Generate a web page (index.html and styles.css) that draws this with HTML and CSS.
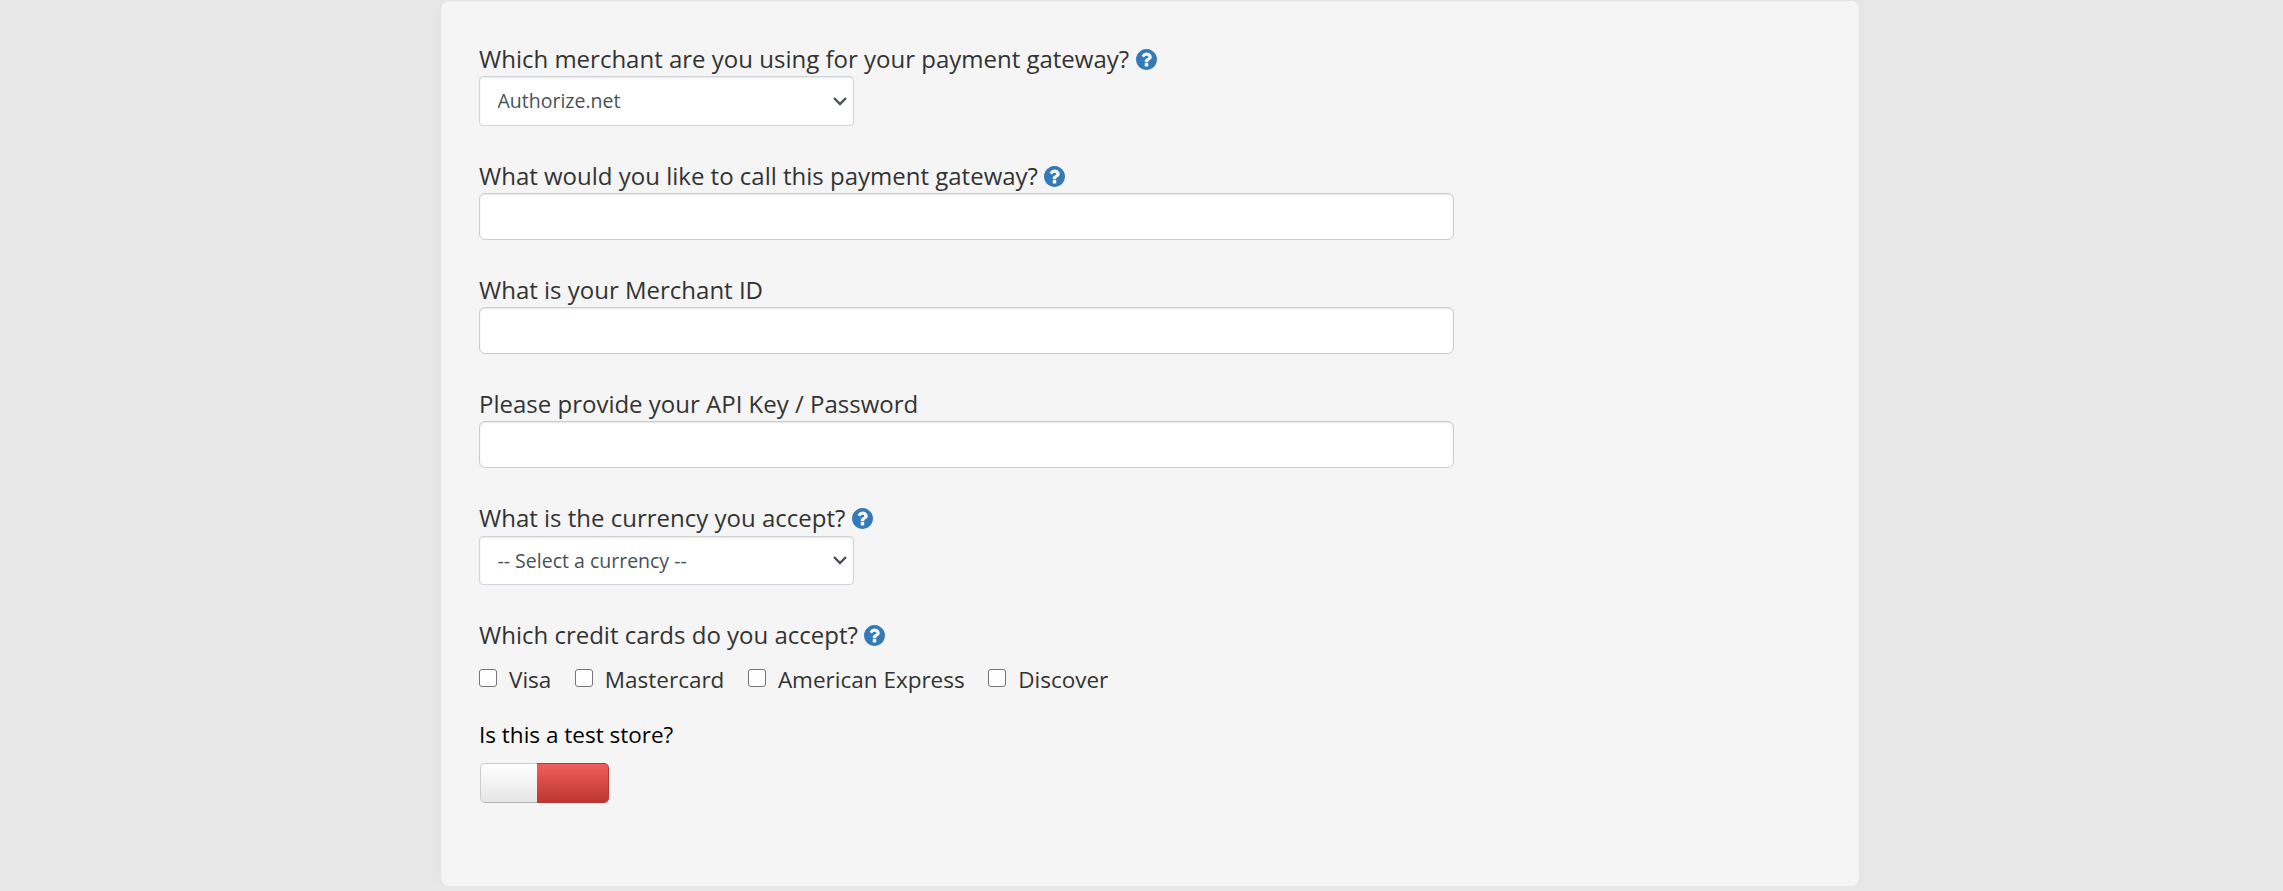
FILE: index.html
```html
<!DOCTYPE html>
<html lang="en">
<head>
<meta charset="utf-8">
<meta name="viewport" content="width=device-width, initial-scale=1">
<title>Payment Gateway</title>
<link rel="stylesheet" href="styles.css">
</head>
<body>
<svg class="sprite" width="0" height="0">
    <symbol id="help" viewBox="0 0 1536 1536">
        <path d="M896 1248v-192q0-14-9-23t-23-9H672q-14 0-23 9t-9 23v192q0 14 9 23t23 9h192q14 0 23-9t9-23zm256-672q0-88-55.500-163T958 297t-170-41q-243 0-371 213-15 24 8 42l132 100q7 6 19 6 16 0 25-12 53-68 86-92 34-24 86-24 48 0 85.500 26t37.500 59q0 38-20 61t-68 45q-63 28-115.500 86.500T640 892v36q0 14 9 23t23 9h192q14 0 23-9t9-23q0-19 21.500-49.500T972 829q32-18 49-28.500t46-35 44.500-48 28-60.500 12.500-81zm384 192q0 209-103 385.500T1153.500 1433 768 1536t-385.500-103T103 1153.500 0 768t103-385.500T382.500 103 768 0t385.500 103T1433 382.500 1536 768z"/>
    </symbol>
    <symbol id="chevron" viewBox="0 0 14 9">
        <path d="M1 1l6 6 6-6" fill="none" stroke="currentColor" stroke-width="2.400"/>
    </symbol>
</svg>

<form class="panel">
    <div class="form-group">
        <label for="merchant">Which merchant are you using for your payment gateway?</label>
        <svg class="help"><use href="#help"/></svg>
        <div class="select-wrap">
            <select class="form-control" id="merchant" name="merchant">
                <option>Authorize.net</option>
            </select>
            <svg class="chevron"><use href="#chevron"/></svg>
        </div>
    </div>

    <div class="form-group">
        <label for="gateway_name">What would you like to call this payment gateway?</label>
        <svg class="help"><use href="#help"/></svg>
        <input type="text" class="text-input" id="gateway_name" name="gateway_name">
    </div>

    <div class="form-group">
        <label for="merchant_id">What is your Merchant ID</label>
        <input type="text" class="text-input" id="merchant_id" name="merchant_id">
    </div>

    <div class="form-group">
        <label for="api_key">Please provide your API Key / Password</label>
        <input type="password" class="text-input" id="api_key" name="api_key">
    </div>

    <div class="form-group currency">
        <label for="currency">What is the currency you accept?</label>
        <svg class="help"><use href="#help"/></svg>
        <div class="select-wrap">
            <select class="form-control" id="currency" name="currency">
                <option>-- Select a currency --</option>
            </select>
            <svg class="chevron"><use href="#chevron"/></svg>
        </div>
    </div>

    <div class="form-group cards">
        <label>Which credit cards do you accept?</label>
        <svg class="help"><use href="#help"/></svg>
        <div class="card-list">
            <label class="check"><input type="checkbox" name="visa">Visa</label>
            <label class="check"><input type="checkbox" name="mastercard">Mastercard</label>
            <label class="check"><input type="checkbox" name="amex">American Express</label>
            <label class="check"><input type="checkbox" name="discover">Discover</label>
        </div>
    </div>

    <div class="test-store">Is this a test store?</div>
    <div class="toggle">
        <span class="toggle-handle"></span>
        <span class="toggle-off"></span>
    </div>
</form>
</body>
</html>
```

FILE: styles.css
```css
* {
    box-sizing: border-box;
}
body {
    margin: 0;
    background-color: #e8e8e8;
    color: #333;
    font-family: "Open Sans", sans-serif;
    font-size: 24px;
    line-height: 34px;
}
.sprite {
    display: block;
}
.panel {
    width: 1418px;
    height: 885px;
    margin: 1px 424px 0 441px;
    padding: 41px 38px 0;
    background-color: #f5f5f5;
    border-radius: 8px;
    box-shadow: 0 0 14px rgba(0, 0, 0, 0.04);
}
.form-group {
    display: flex;
    flex-wrap: wrap;
    align-items: center;
    column-gap: 6.5px;
    margin-bottom: 33px;
}
.help {
    width: 21px;
    height: 21px;
    fill: #337ab7;
}
.select-wrap {
    position: relative;
    flex: 0 0 100%;
    height: 50px;
}
.form-control {
    appearance: none;
    display: block;
    width: 375px;
    height: 50px;
    padding: 0 17.5px 2px;
    border: 1px solid #ced4da;
    border-radius: 4px;
    background-color: #fff;
    box-shadow: inset 0 1px 2px rgba(0, 0, 0, 0.1);
    color: #495057;
    font-family: inherit;
    font-size: 19.5px;
}
.chevron {
    position: absolute;
    left: 354px;
    top: 21px;
    width: 14px;
    height: 9px;
    color: #495057;
}
.text-input {
    display: block;
    width: 975px;
    height: 47px;
    margin-right: 300px;
    padding: 6px 12px;
    border: 1px solid #ccc;
    border-radius: 6px;
    background-color: #fff;
    box-shadow: inset 0 1px 2px rgba(0, 0, 0, 0.1);
    font-size: 20px;
}
.currency .select-wrap,
.currency .form-control {
    height: 49px;
}
.currency .form-control {
    padding-bottom: 0;
}
.currency .chevron {
    top: 20px;
}
.currency .select-wrap {
    margin-top: 1px;
}
.cards {
    margin-bottom: 22px;
}
.card-list {
    display: flex;
    flex: 0 0 100%;
    gap: 23.5px;
    margin-top: 10px;
}
.check {
    display: flex;
    font-size: 22.5px;
    line-height: 36px;
    height: 34px;
}
.check input {
    appearance: none;
    width: 18px;
    height: 18px;
    margin: 7px 12px 0 0;
    border: 1px solid #767676;
    border-radius: 3px;
    background-color: #fff;
}
.test-store {
    color: #000;
    font-size: 22.5px;
}
/* On/off switch, shown in the off position */
.toggle {
    display: flex;
    width: 129px;
    height: 40px;
    margin: 11px 0 0 1px;
}
.toggle-handle {
    width: 57px;
    border: 1px solid #ccc;
    border-right: 0;
    border-bottom-color: #b3b3b3;
    border-radius: 5px 0 0 5px;
    background: linear-gradient(#fff, #e6e6e6);
}
.toggle-off {
    width: 72px;
    border: 1px solid #bd362f;
    border-left: 0;
    border-radius: 0 5px 5px 0;
    background: linear-gradient(#ee5f5b, #bd362f);
}
```
